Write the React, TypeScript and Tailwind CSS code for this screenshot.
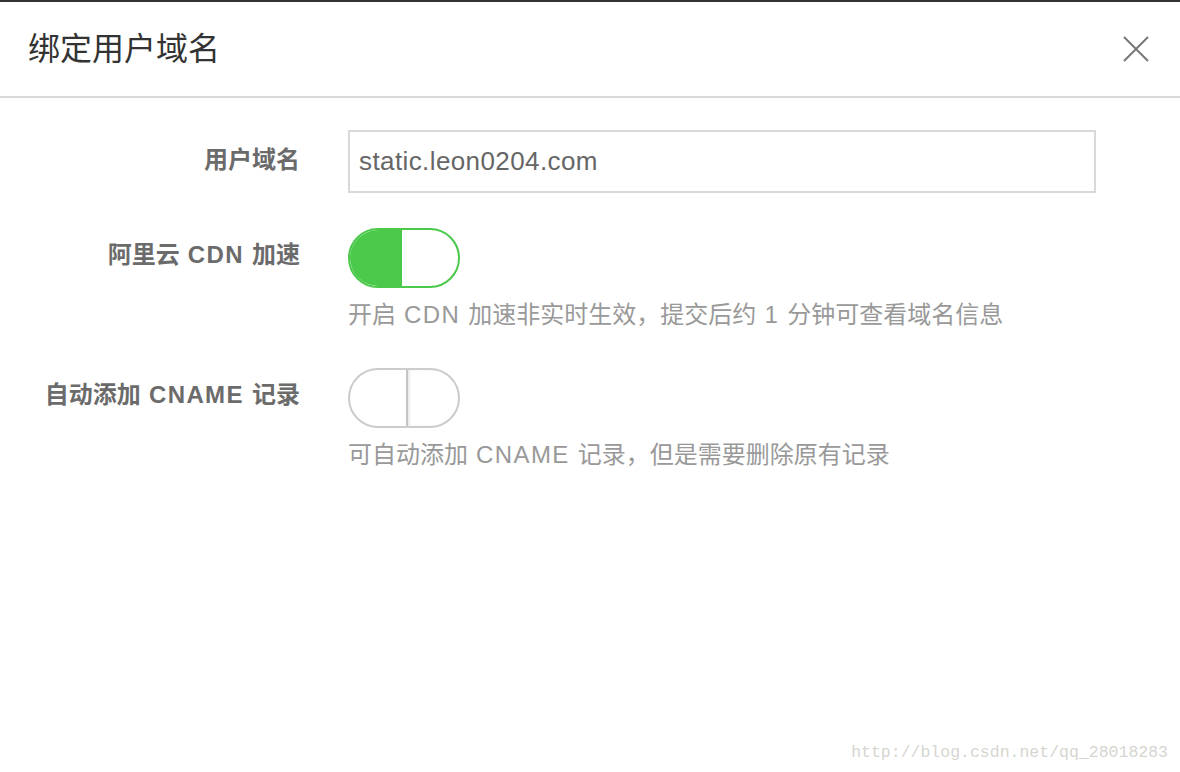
import React from "react";

const cjk = '"Liberation Sans", "Noto Sans CJK SC", sans-serif';

function Toggle({ on }: { on: boolean }) {
    if (on) {
        return (
            <div className="flex h-[60px] w-[112px] overflow-hidden rounded-full border-2 border-[#4bc94b] bg-white">
                <div className="w-[52px] bg-[#4bc94b]" />
                <div className="flex-1" />
            </div>
        );
    }
    return (
        <div className="flex h-[60px] w-[112px] overflow-hidden rounded-full border-2 border-[#cccccc] bg-white">
            <div className="w-[56px]" />
            <div className="flex-1 border-l-2 border-[#c4c4c4] shadow-[inset_2px_0_2px_rgba(0,0,0,0.08)]" />
        </div>
    );
}

// latin words in the original font run a bit wider
function L({ children }: { children: React.ReactNode }) {
    return <span className="tracking-[1.4px]">{children}</span>;
}

function Label({ children }: { children: React.ReactNode }) {
    return (
        <div className="flex h-[60px] w-[300px] shrink-0 items-center justify-end text-[24px] font-bold text-[#6b6b6b]">
            <span>{children}</span>
        </div>
    );
}

export default function App() {
    return (
        <div className="relative h-[772px] w-[1180px] overflow-hidden bg-white" style={{ fontFamily: cjk }}>
            <div className="h-[2px] bg-[#333333]" />
            <div className="flex h-[96px] items-center justify-between border-b-2 border-[#d9d9d9] pl-[28px] pr-[30px]">
                <h1 className="text-[32px] font-normal text-[#333333]">绑定用户域名</h1>
                <button className="cursor-pointer text-[#777777]">
                    <svg width="28" height="28" viewBox="0 0 28 28" fill="none" stroke="currentColor" strokeWidth={2}>
                        <path d="M2 2L26 26M26 2L2 26" />
                    </svg>
                </button>
            </div>

            <div className="mt-[32px] flex items-center">
                <div className="-mt-[3px] w-[300px] shrink-0 text-right text-[24px] font-bold text-[#6b6b6b]">用户域名</div>
                <input
                    type="text"
                    defaultValue="static.leon0204.com"
                    className="ml-[48px] h-[63px] w-[748px] border-2 border-[#d9d9d9] px-[9px] text-[26px] tracking-[0.4px] text-[#666666] outline-none"
                    style={{ fontFamily: cjk }}
                />
            </div>

            <div className="mt-[35px] flex items-start">
                <div className="-mt-[3px]"><Label>阿里云<L> CDN </L>加速</Label></div>
                <div className="ml-[48px]">
                    <Toggle on />
                    <p className="mt-[11px] text-[24px] leading-[32px] text-[#999999]">
                        开启<L> CDN </L>加速非实时生效，提交后约<L> 1 </L>分钟可查看域名信息
                    </p>
                </div>
            </div>

            <div className="mt-[37px] flex items-start">
                <div className="-mt-[3px]"><Label>自动添加<L> CNAME </L>记录</Label></div>
                <div className="ml-[48px]">
                    <Toggle on={false} />
                    <p className="mt-[11px] text-[24px] leading-[32px] text-[#999999]">
                        可自动添加<L> CNAME </L>记录，但是需要删除原有记录
                    </p>
                </div>
            </div>

            <div
                className="absolute bottom-[6px] right-[12px] text-[16.5px] text-[#d6d6d0]"
                style={{ fontFamily: '"Liberation Mono", monospace' }}
            >
                http://blog.csdn.net/qq_28018283
            </div>
        </div>
    );
}
